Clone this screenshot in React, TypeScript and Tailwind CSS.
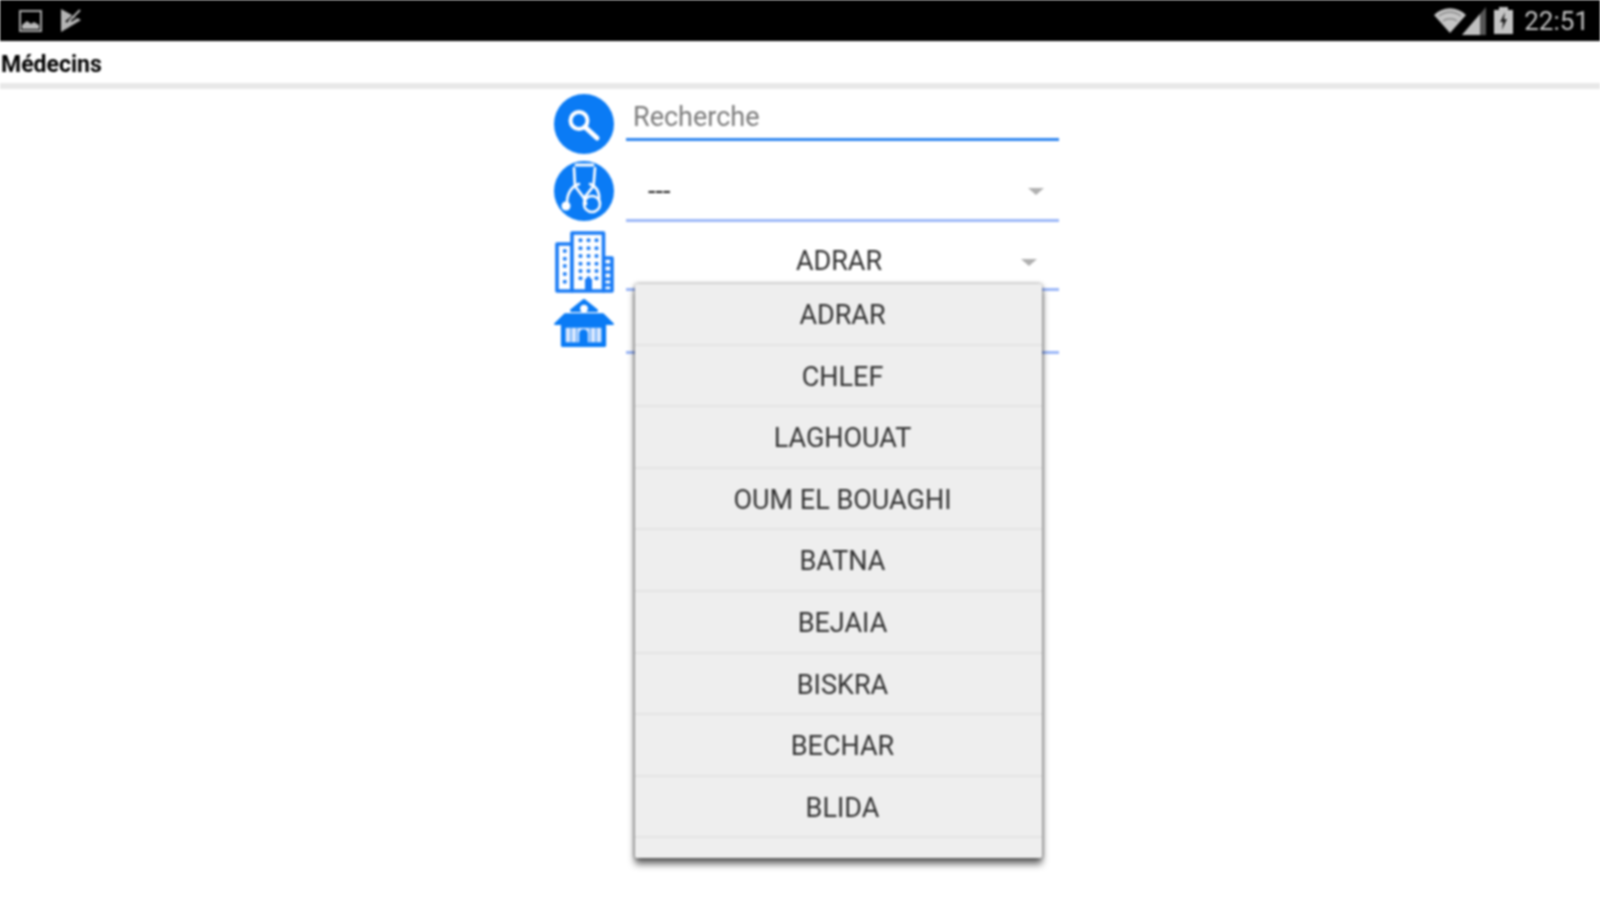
const wilayas = ['ADRAR', 'CHLEF', 'LAGHOUAT', 'OUM EL BOUAGHI', 'BATNA', 'BEJAIA', 'BISKRA', 'BECHAR', 'BLIDA'];

function StatusLeftIcons() {
  return (
    <div className="flex items-center gap-[18px]">
      <svg width="23" height="22" viewBox="0 0 23 22">
        <rect x="1" y="1" width="21" height="20" fill="none" stroke="#a8a8a8" strokeWidth="2" />
        <path d="M3 15l5-4 4 3 3-2 5 3v4H3z" fill="#b8b8b8" />
      </svg>
      <svg width="23" height="25" viewBox="0 0 23 25">
        <path d="M1 1l20 11L1 24z" fill="#b4b4b4" />
        <path d="M6 14L21 1M11 13l8-5" stroke="#000" strokeWidth="2" fill="none" />
        <path d="M9 13l11-11" stroke="#b4b4b4" strokeWidth="2" fill="none" />
      </svg>
    </div>
  );
}

function StatusRightIcons() {
  return (
    <div className="flex items-center">
      <svg width="32" height="26" viewBox="0 0 32 26">
        <path d="M0 7C9-2 23-2 32 7L16 25z" fill="#c4c4c4" />
        <path d="M5 8c7-5 15-5 22 0M9 13c4-3 10-3 14 0" stroke="#8a8a8a" strokeWidth="1.5" fill="none" />
      </svg>
      <svg className="ml-[-4px]" width="24" height="28" viewBox="0 0 24 28">
        <path d="M0 28L24 0v28z" fill="#555" />
        <path d="M0 28L18 7v21z" fill="#c0c0c0" />
      </svg>
      <svg className="ml-[8px]" width="19" height="27" viewBox="0 0 19 27">
        <path d="M5 0h9v3h5v24H0V3h5z" fill="#c4c4c4" />
        <path d="M11 5L6 15h3l-1 8 5-11h-3z" fill="#222" />
      </svg>
      <span className="ml-[11px] mr-[11px] text-[26px] leading-none text-[#c2c2c2] font-['Roboto',sans-serif]">22:51</span>
    </div>
  );
}

function SearchIcon() {
  return (
    <svg className="block" width="60" height="60" viewBox="0 0 60 60">
      <circle cx="30" cy="30" r="30" fill="#0a7bf5" />
      <circle cx="25" cy="26.500" r="8.500" fill="none" stroke="#fff" strokeWidth="4" />
      <path d="M31 33l12 11" stroke="#fff" strokeWidth="5" strokeLinecap="round" />
    </svg>
  );
}

function StethoscopeIcon() {
  return (
    <svg className="block" width="60" height="60" viewBox="0 0 60 60">
      <circle cx="30" cy="30" r="30" fill="#0a7bf5" />
      <g fill="none" stroke="#fff" strokeWidth="2.600" strokeLinecap="round">
        <path d="M22 4h17" strokeWidth="3" />
        <path d="M20 7l1 18 9 12 9.500-12 1.500-18" />
        <path d="M30 37l2 6" />
        <circle cx="38" cy="43" r="8" />
        <path d="M13 42c0-10 5-17 12-19M36 23c6 2 10 8 9 16" />
      </g>
      <circle cx="12" cy="45" r="4.500" fill="#fff" />
    </svg>
  );
}

function BuildingIcon() {
  const mainRows = [11.3, 19.3, 27, 34.7, 42, 49.3];
  const sideRows = [22, 29.7, 37, 45, 52.7];
  return (
    <svg className="block" width="60" height="66" viewBox="0 0 60 66">
      <g fill="#fff" stroke="#1a7cf6" strokeWidth="3.600" strokeLinejoin="round">
        <rect x="3" y="15" width="15" height="47" />
        <rect x="49.500" y="29" width="8.500" height="33" />
        <rect x="18" y="4" width="31.500" height="58" />
      </g>
      {mainRows.map((y) =>
        [26.500, 34.500, 42.500].map((x) => <circle key={`${x}-${y}`} cx={x} cy={y} r="2" fill="#1a7cf6" />),
      )}
      {sideRows.map((y) => (
        <circle key={y} cx="10.800" cy={y} r="2" fill="#1a7cf6" />
      ))}
      <rect x="31" y="50" width="7" height="12" fill="#1a7cf6" />
      <path d="M51 36h6M51 43h6M51 50h6M51 56h6" stroke="#1a7cf6" strokeWidth="3" />
    </svg>
  );
}

function SchoolIcon() {
  return (
    <svg className="block" width="60" height="52" viewBox="0 0 62 54">
      <path d="M18 14L31 3.500 44 14z" fill="#0a7bf5" stroke="#0a7bf5" strokeWidth="3" strokeLinejoin="round" />
      <circle cx="31" cy="12" r="4" fill="#fff" />
      <path d="M1 28l10-10h40l10 10z" fill="#0a7bf5" stroke="#0a7bf5" strokeWidth="2" strokeLinejoin="round" />
      <rect x="7" y="28" width="47" height="24" rx="2" fill="#0a7bf5" />
      <rect x="12" y="32" width="37" height="15" fill="#d8e7fd" />
      <path d="M17.500 32v15M23.500 32v15M37.500 32v15M43.500 32v15" stroke="#5aa4f8" strokeWidth="1.500" />
      <path d="M26 50v-12a4.500 4.500 0 019 0v12z" fill="#0a7bf5" />
    </svg>
  );
}

function Caret() {
  return <span className="h-0 w-0 border-x-[8px] border-t-[7px] border-x-transparent border-t-[#b0b0b0]" />;
}

export default function App() {
  return (
    <div className="h-[900px] w-[1600px] overflow-hidden bg-white font-['Roboto',sans-serif] blur-[0.8px]">
      <div className="flex h-[41px] items-center justify-between bg-black pl-[19px]">
        <StatusLeftIcons />
        <StatusRightIcons />
      </div>

      <div className="flex h-[42px] items-center bg-white pl-[1px] pt-[7px] text-[23px] font-bold text-black">Médecins</div>
      <div className="h-[6px] bg-[#e8e8e8]" />

      <div className="ml-[554px] mt-[5px] flex w-[505px] items-start">
        <div className="flex w-[60px] flex-col items-center">
          <SearchIcon />
          <div className="mt-[7px]">
            <StethoscopeIcon />
          </div>
          <div className="mt-[8px]">
            <BuildingIcon />
          </div>
          <div className="mt-[2px]">
            <SchoolIcon />
          </div>
        </div>

        <div className="relative ml-[12px] w-[434px]">
          <div className="flex h-[47px] items-center border-b-[3px] border-[#2f86f0] pl-[7px] pt-[3px] text-[27px] text-[#7c7c7c]">Recherche</div>

          <div className="flex h-[81px] items-center justify-between border-b-[3px] border-[#9db8f8] pl-[22px] pr-[15px] pt-[22px]">
            <span className="text-[27px] leading-none text-[#222]">---</span>
            <Caret />
          </div>

          <div className="relative flex h-[69px] items-center justify-center border-b-[3px] border-[#9db8f8] pt-[13px] pr-[7px] text-[27px] text-[#333]">
            ADRAR
            <span className="absolute right-[22px] top-[37px] flex">
              <Caret />
            </span>
          </div>

          <div className="h-[63px] border-b-[3px] border-[#9db8f8]" />

          <div className="absolute left-[9px] top-[190px] h-[574px] w-[407px] overflow-hidden rounded-[2px] bg-[#eeeeee] shadow-[0_6px_7px_rgba(0,0,0,0.6),0_0_4px_rgba(0,0,0,0.45)]">
            {wilayas.map((name) => (
              <div key={name} className="flex h-[61.6px] items-center justify-center border-b-2 border-[#e3e3e3] pl-[8px] pt-[3px] text-[27px] text-[#333]">
                {name}
              </div>
            ))}
          </div>
        </div>
      </div>
    </div>
  );
}
